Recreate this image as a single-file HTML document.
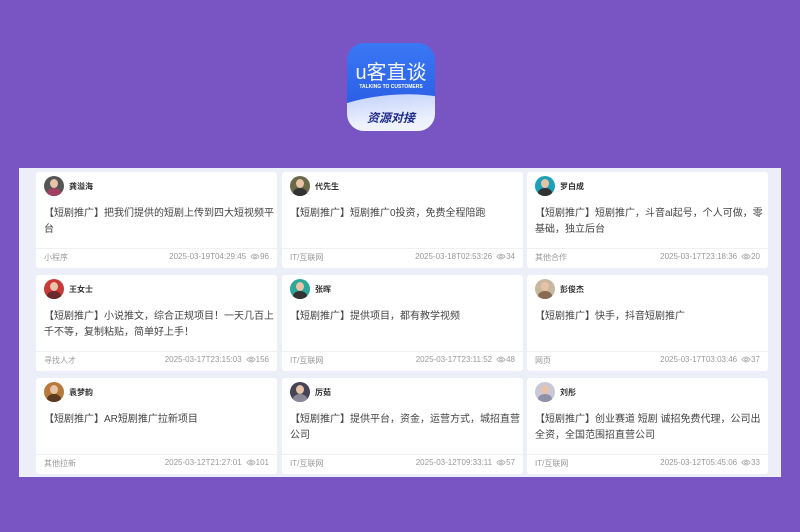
<!DOCTYPE html>
<html><head><meta charset="utf-8"><style>
*{margin:0;padding:0;box-sizing:border-box}
body{width:800px;height:532px;background:#7855c3;position:relative;overflow:hidden;font-family:"Liberation Sans","Noto Sans CJK SC",sans-serif}
.logo{position:absolute;left:347px;top:43px;width:88px;height:88px;border-radius:17px;overflow:hidden;background:linear-gradient(180deg,#3a78f4,#2b5fe6 70%)}
.logo .t{position:absolute;top:13px;width:100%;text-align:center;color:#f4f6ff;font-size:20px}
.logo .s{position:absolute;top:41px;width:100%;text-align:center;color:#fff;font-size:5px;font-weight:bold}
.logo .w{position:absolute;left:-30px;top:52px;width:150px;height:70px;background:linear-gradient(180deg,#c8d6fb,#eef2fd 40%,#f6f7fd);border-radius:50% 50% 0 0/35% 35% 0 0;transform:rotate(-5deg)}
.logo .b{position:absolute;top:66px;width:100%;text-align:center;color:#1c2a8a;font-size:12px;font-weight:bold;font-style:italic}
.panel{position:absolute;left:19px;top:168px;width:762px;height:309px;background:#eceef8}
.card{position:absolute;width:241px;height:96px;background:#fff;border-radius:3px}
.av{position:absolute;left:8px;top:4px;width:20px;height:20px;border-radius:50%;overflow:hidden}
.av i{position:absolute;left:6px;top:3px;width:8px;height:9px;border-radius:50%;background:#e9c3a8}
.av b{position:absolute;left:3px;top:12px;width:14px;height:10px;border-radius:50% 50% 0 0;background:#333}
.nm{position:absolute;left:33px;top:9px;font-size:8px;font-weight:bold;color:#333}
.tx{position:absolute;left:8px;top:34px;width:234px;font-size:10px;line-height:16px;color:#444}
.ln{position:absolute;left:0;right:0;top:76px;border-top:1px solid #f0f0f3}
.ft{position:absolute;left:8px;right:8px;top:80px;font-size:8px;color:#999;display:flex;justify-content:space-between}
.ft svg{vertical-align:-1px;margin-left:4px}
</style></head><body>
<div class="logo"><div class="t">u客直谈</div><div class="s">TALKING TO CUSTOMERS</div><div class="w"></div><div class="b">资源对接</div></div>
<svg width="0" height="0" style="position:absolute"><defs><symbol id="e" viewBox="0 0 12 8"><path d="M1 4Q6-2 11 4Q6 10 1 4Z" fill="none" stroke="#aaa" stroke-width="1"/><circle cx="6" cy="4" r="1.6" fill="none" stroke="#aaa"/></symbol></defs></svg>
<div class="panel">
<div class="card" style="left:17px;top:4px"><div class="av" style="background:#555"><i></i><b style="background:#a04060"></b></div><div class="nm">龚溢海</div><div class="tx">【短剧推广】把我们提供的短剧上传到四大短视频平台</div><div class="ln"></div><div class="ft"><span>小程序</span><span>2025-03-19T04:29:45<svg width="10" height="7"><use href="#e"/></svg>96</span></div></div>
<div class="card" style="left:263px;top:4px"><div class="av" style="background:#6a6a4a"><i></i><b></b></div><div class="nm">代先生</div><div class="tx">【短剧推广】短剧推广0投资，免费全程陪跑</div><div class="ln"></div><div class="ft"><span>IT/互联网</span><span>2025-03-18T02:53:26<svg width="10" height="7"><use href="#e"/></svg>34</span></div></div>
<div class="card" style="left:508px;top:4px"><div class="av" style="background:#1ea0b8"><i></i><b></b></div><div class="nm">罗白成</div><div class="tx">【短剧推广】短剧推广，斗音al起号，个人可做，零基础，独立后台</div><div class="ln"></div><div class="ft"><span>其他合作</span><span>2025-03-17T23:18:36<svg width="10" height="7"><use href="#e"/></svg>20</span></div></div>
<div class="card" style="left:17px;top:107px"><div class="av" style="background:#c83a3a"><i></i><b style="background:#6a2a2a"></b></div><div class="nm">王女士</div><div class="tx">【短剧推广】小说推文，综合正规项目！一天几百上千不等，复制粘贴，简单好上手！</div><div class="ln"></div><div class="ft"><span>寻找人才</span><span>2025-03-17T23:15:03<svg width="10" height="7"><use href="#e"/></svg>156</span></div></div>
<div class="card" style="left:263px;top:107px"><div class="av" style="background:#2aa89a"><i></i><b></b></div><div class="nm">张晖</div><div class="tx">【短剧推广】提供项目，都有教学视频</div><div class="ln"></div><div class="ft"><span>IT/互联网</span><span>2025-03-17T23:11:52<svg width="10" height="7"><use href="#e"/></svg>48</span></div></div>
<div class="card" style="left:508px;top:107px"><div class="av" style="background:#c8b8a0"><i></i><b style="background:#8a6a50"></b></div><div class="nm">彭俊杰</div><div class="tx">【短剧推广】快手，抖音短剧推广</div><div class="ln"></div><div class="ft"><span>网页</span><span>2025-03-17T03:03:46<svg width="10" height="7"><use href="#e"/></svg>37</span></div></div>
<div class="card" style="left:17px;top:210px"><div class="av" style="background:#b87a3a"><i></i><b style="background:#5a3a20"></b></div><div class="nm">袁梦韵</div><div class="tx">【短剧推广】AR短剧推广拉新项目</div><div class="ln"></div><div class="ft"><span>其他拉新</span><span>2025-03-12T21:27:01<svg width="10" height="7"><use href="#e"/></svg>101</span></div></div>
<div class="card" style="left:263px;top:210px"><div class="av" style="background:#445"><i></i><b style="background:#889"></b></div><div class="nm">厉茹</div><div class="tx">【短剧推广】提供平台，资金，运营方式，城招直营公司</div><div class="ln"></div><div class="ft"><span>IT/互联网</span><span>2025-03-12T09:33:11<svg width="10" height="7"><use href="#e"/></svg>57</span></div></div>
<div class="card" style="left:508px;top:210px"><div class="av" style="background:#c8c8d8"><i></i><b style="background:#9090a8"></b></div><div class="nm">刘彤</div><div class="tx">【短剧推广】创业赛道 短剧 诚招免费代理，公司出全资，全国范围招直营公司</div><div class="ln"></div><div class="ft"><span>IT/互联网</span><span>2025-03-12T05:45:06<svg width="10" height="7"><use href="#e"/></svg>33</span></div></div>
</div>
</body></html>
